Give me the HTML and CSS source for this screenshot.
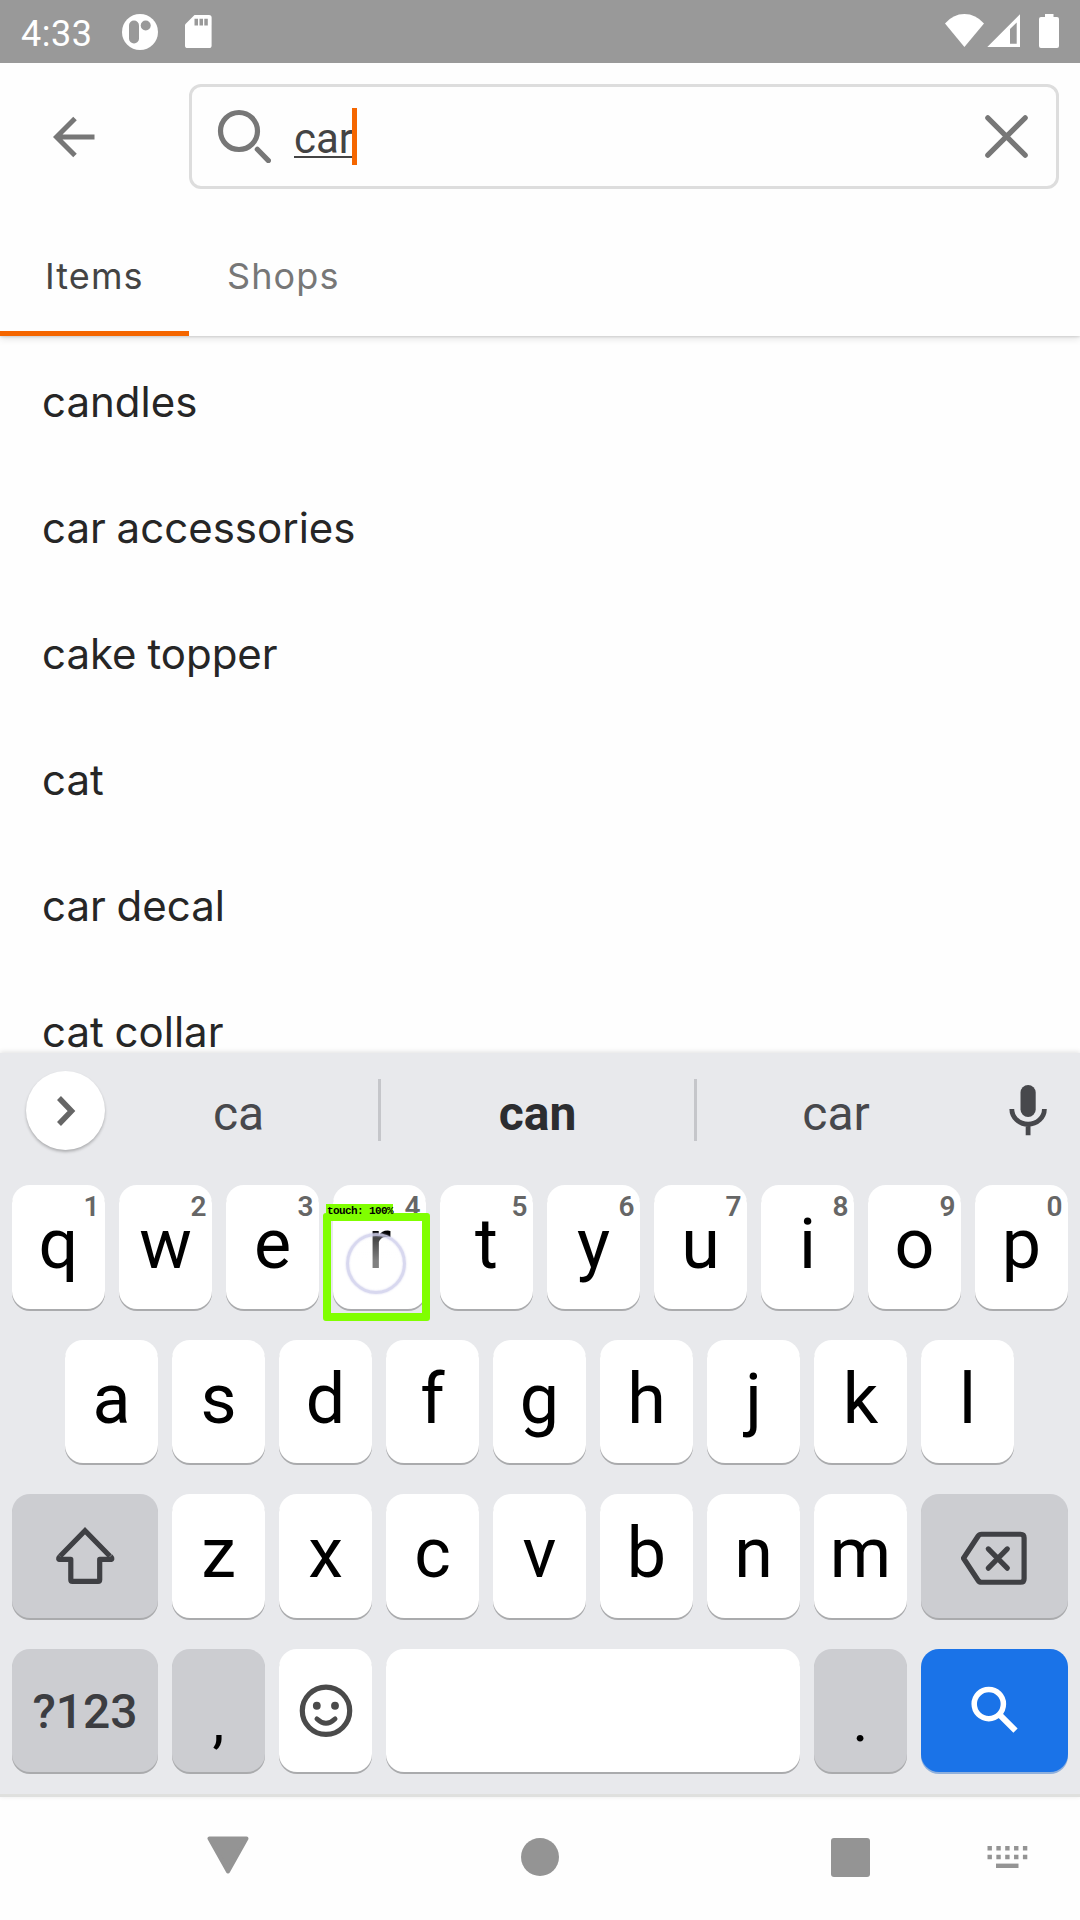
FILE: index.html
```html
<!DOCTYPE html>
<html lang="en">
<head>
<meta charset="utf-8">
<title>Search</title>
<link rel="stylesheet" href="styles.css">
</head>
<body>
<div class="screen">
  <header class="status">
    <span class="clock">4:33</span>
    <svg class="status-app" width="36" height="36" viewBox="0 0 36 36"><circle cx="18" cy="18" r="18" fill="#fff"/><rect x="7" y="6.5" width="10" height="23" rx="5" fill="#999"/><circle cx="23.7" cy="11.5" r="5" fill="#999"/></svg>
    <svg class="status-sd" width="27" height="33" viewBox="0 0 27 33"><path d="M9.5 0H24a2.6 2.6 0 0 1 2.6 2.6v27.8A2.6 2.6 0 0 1 24 33H2.6A2.6 2.6 0 0 1 0 30.400V9.500z" fill="#fff"/><path d="M9.500 3.700H13v6.800H9.500zM14.500 3.700H18v6.800h-3.500zM19.300 3.700h3.500v6.800h-3.500z" fill="#999"/></svg>
    <svg class="status-signal" width="116" height="36" viewBox="944 13 116 36" fill="#fff"><path d="M945 23.500Q953 14 964.400 14T984 23.500L964.400 47z"/><path fill-rule="evenodd" d="M987.300 47L1020 14.300V47zM1010 29v14.700h6.700V22.400z"/><path d="M1045 14h8.500v3h3.500a2 2 0 0 1 2 2v27a2 2 0 0 1-2 2h-16a2 2 0 0 1-2-2V19a2 2 0 0 1 2-2h4z"/></svg>
  </header>

  <div class="searchbar">
    <svg class="back" width="42" height="42" viewBox="53 115.500 42 42" fill="none" stroke="#777" stroke-width="5"><path d="M94.500 136.500H57M75 118L56.500 136.500 75 155"/></svg>
    <div class="field">
      <svg class="lens" width="54" height="54" viewBox="217 109 54 54" fill="none" stroke="#777" stroke-width="5.200" stroke-linecap="round"><circle cx="239" cy="131" r="18.500"/><path d="M257.300 149.300L268.400 160.600"/></svg>
      <span class="query">car</span><span class="caret"></span>
      <svg class="clear" width="43" height="43" viewBox="0 0 43 43" fill="none" stroke="#777" stroke-width="5.200" stroke-linecap="round"><path d="M2.800 2.800L40.200 40.200M40.200 2.800L2.800 40.200"/></svg>
    </div>
  </div>

  <nav class="tabs">
    <div class="tab active"><span>Items</span></div>
    <div class="tab"><span>Shops</span></div>
  </nav>

  <ul class="list">
    <li>candles</li>
    <li>car accessories</li>
    <li>cake topper</li>
    <li>cat</li>
    <li>car decal</li>
    <li>cat collar</li>
  </ul>

  <section class="keyboard">
    <div class="suggest">
      <div class="expand"><svg width="20" height="32" viewBox="0 0 20 32" fill="none" stroke="#666" stroke-width="5.500"><path d="M3 3L15.500 16 3 29"/></svg></div>
      <span class="word first">ca</span>
      <i class="sep"></i>
      <span class="word best">can</span>
      <i class="sep"></i>
      <span class="word">car</span>
      <svg class="mic" width="38" height="52" viewBox="1008.500 1084 38 52" fill="none" stroke="#47484c"><rect x="1020" y="1085" width="15.200" height="32" rx="7.600" fill="#47484c" stroke="none"/><path d="M1011.300 1109a16.300 15.300 0 0 0 32.600 0M1027.600 1124v11.300" stroke-width="4.800"/></svg>
    </div>
    <div class="rows">
      <div class="row">
        <div class="key">q<sup>1</sup></div><div class="key">w<sup>2</sup></div><div class="key">e<sup>3</sup></div>
        <div class="key">r<sup>4</sup>
          <div class="ripple"></div>
          <div class="box"></div>
          <div class="label">touch: 100%</div>
        </div>
        <div class="key">t<sup>5</sup></div><div class="key">y<sup>6</sup></div><div class="key">u<sup>7</sup></div><div class="key">i<sup>8</sup></div><div class="key">o<sup>9</sup></div><div class="key">p<sup>0</sup></div>
      </div>
      <div class="row inset">
        <div class="key">a</div><div class="key">s</div><div class="key">d</div><div class="key">f</div><div class="key">g</div><div class="key">h</div><div class="key">j</div><div class="key">k</div><div class="key">l</div>
      </div>
      <div class="row">
        <div class="key wide gray"><svg width="62" height="60" viewBox="54 1526 62 60" fill="none" stroke="#3f4044" stroke-width="5.200" stroke-linejoin="round"><path stroke-linejoin="miter" d="M60 1556.500L85 1531l25 25.500"/><path d="M60 1556.500q-3 3.200.6 3.200h10.200v20.300q0 1.600 1.600 1.600h25.700q1.600 0 1.600-1.600v-20.300h10.200q3.600 0 .6-3.200"/></svg></div>
        <div class="key">z</div><div class="key">x</div><div class="key">c</div><div class="key">v</div><div class="key">b</div><div class="key">n</div><div class="key">m</div>
        <div class="key wide gray"><svg width="68" height="56" viewBox="960.500 1528 68 56" fill="none" stroke="#3f4044" stroke-width="5.200" stroke-linejoin="round" stroke-linecap="round"><path d="M963 1558.500L977.500 1536.500q1.300-2 3.500-2h39q3.600 0 3.600 3.600v40.800q0 3.600-3.600 3.600H981q-2.200 0-3.500-2z"/><path d="M987.800 1549.200l19 19.200M1006.800 1549.200l-19 19.200"/></svg></div>
      </div>
      <div class="row">
        <div class="key wide gray sym">?123</div>
        <div class="key gray punct">,</div>
        <div class="key"><svg width="54" height="54" viewBox="0 0 54 54" fill="none" stroke="#4a4a4a" stroke-width="5.200"><circle cx="27" cy="27" r="23.700"/><g fill="#4a4a4a" stroke="none"><circle cx="17.800" cy="22" r="3.900"/><circle cx="36" cy="22" r="3.900"/></g><path d="M17.800 35q9.200 9 18.400 0" stroke-width="4.600" stroke-linecap="round"/></svg></div>
        <div class="key space"></div>
        <div class="key gray punct">.</div>
        <div class="key wide blue"><svg width="48" height="46" viewBox="970 1686.700 48 46" fill="none" stroke="#fff" stroke-width="5.500"><circle cx="987.800" cy="1704" r="14.600"/><path d="M999 1715L1014.500 1730.500" stroke-width="6"/></svg></div>
      </div>
    </div>
  </section>

  <footer class="navbar">
    <svg class="nav-back" width="42" height="38" viewBox="0 0 42 38"><path d="M2.500 2.500h37L21 35.500z" fill="#949494" stroke="#949494" stroke-width="4" stroke-linejoin="round"/></svg>
    <i class="nav-home"></i>
    <i class="nav-recent"></i>
    <svg class="nav-ime" width="41" height="24" viewBox="0 0 41 24" fill="none" stroke="#949494" stroke-width="4.400"><path stroke-dasharray="4.400 4.450" d="M.5 3.200H40.500M.5 12H40.500"/><path d="M9 20.800h22.500"/></svg>
  </footer>
</div>
</body>
</html>
```
FILE: styles.css
```css
* { box-sizing: border-box; }
body { margin: 0; }
svg { display: block; flex: none; }

.screen {
  width: 1080px;
  height: 1920px;
  display: flex;
  flex-direction: column;
  overflow: hidden;
  background: #fefefe;
  font-family: Roboto, "Noto Sans", sans-serif;
}

/* status bar */
.status {
  height: 63px;
  flex: none;
  display: flex;
  align-items: flex-start;
  padding: 0 20px 0 21px;
  background: #999;
  color: #fff;
}
.clock { width: 101px; font-size: 36px; line-height: 68px; letter-spacing: .5px; }
.status-app { margin-top: 14px; }
.status-sd { margin: 15px 0 0 27px; }
.status-signal { margin: 13px 0 0 auto; }

/* search field */
.searchbar {
  height: 147px;
  flex: none;
  display: flex;
  align-items: flex-start;
  padding: 21px 21px 0 53px;
}
.back { margin: 31.500px 94px 0 0; }
.field {
  flex: 1;
  height: 105px;
  display: flex;
  align-items: flex-start;
  border: 3px solid #ddd;
  border-radius: 12px;
}
.lens { margin: 22px 23px 0 25px; }
.query {
  margin-top: 21px;
  width: 58px;
  font-size: 42px;
  line-height: 62px;
  color: #444;
  text-decoration: underline;
  text-decoration-thickness: 2px;
  text-underline-offset: 3px;
}
.caret { width: 5px; height: 57px; margin-top: 21px; background: #f56600; }
.clear { margin: 28px 28px 0 auto; }

/* tabs */
.tabs {
  position: relative;
  z-index: 1;
  height: 126px;
  flex: none;
  display: flex;
  background: #fefefe;
  box-shadow: 0 1px 2px rgba(0, 0, 0, .12), 0 3px 7px rgba(0, 0, 0, .1);
  clip-path: inset(0 0 -12px 0);
  font: 36px/132px Inter, sans-serif;
  color: #777;
}
.tab { padding: 0 38px; letter-spacing: 1.1px; }
.tab.active { width: 189px; padding: 0 0 0 45px; color: #444; border-bottom: 5px solid #f56600; }

/* suggestions from the shop */
.list {
  flex: none;
  height: 717px;
  margin: 0;
  padding: 3px 0 0 42px;
  overflow: hidden;
  list-style: none;
  font: 42px/126px Inter, sans-serif;
  word-spacing: -1px;
  color: #262626;
}

/* keyboard */
.keyboard {
  position: relative;
  z-index: 1;
  height: 744px;
  flex: none;
  background: #e8e9ec;
  border-bottom: 3px solid #dfe0de;
  box-shadow: 0 -1px 5px rgba(0, 0, 0, .12);
}
.suggest { height: 132px; display: flex; align-items: flex-start; }
.expand {
  width: 79px;
  height: 79px;
  margin: 18px 0 0 26px;
  display: flex;
  align-items: center;
  justify-content: center;
  border-radius: 50%;
  background: #fff;
  box-shadow: 0 2px 3px rgba(0, 0, 0, .25);
}
.word { width: 313px; text-align: center; font-size: 48px; line-height: 121px; color: #47484c; }
.word.first { width: 273px; padding-right: 6px; }
.word.best { font-weight: 700; color: #2c2d30; }
.suggest .word:last-of-type { width: 278px; }
.sep { width: 3px; height: 62px; margin-top: 26px; background: #c5c6ca; }
.mic { margin: 31px 33.500px 0 auto; }

.rows { display: flex; flex-direction: column; gap: 31px; padding: 0 12px; }
.row { display: flex; gap: 14px; height: 123.500px; }
.row.inset { padding: 0 53px; }
.key {
  position: relative;
  width: 93px;
  flex: none;
  border-radius: 18px;
  background: #fff;
  box-shadow: 0 2px 0 #aaabad;
  font-size: 70px;
  line-height: 118px;
  text-align: center;
  color: #000;
}
.key > svg { margin: auto; height: 100%; }
.wide { width: 146px; }
.wide:last-child { width: 147px; }
.gray { background: #cccdd1; }
.blue { background: #1a73e8; box-shadow: 0 2px 0 #8fb0dc; }
.blue > svg { margin-top: -1px; }
.space { width: 414px; }
.sym { font-size: 48px; line-height: 126px; font-weight: 500; color: #3c3d41; }
.punct { font-size: 60px; line-height: 143px; }
sup {
  position: absolute;
  top: 0;
  right: 5.500px;
  font-size: 28px;
  line-height: 43px;
  font-weight: 600;
  color: #666;
}

/* touch annotation over the pressed key */
.ripple {
  position: absolute;
  left: 13px;
  top: 48px;
  width: 60px;
  height: 61px;
  border-radius: 50%;
  border: 3px solid rgba(200, 200, 232, .7);
  background: linear-gradient(rgba(255, 255, 255, .25), rgba(255, 255, 255, .5) 45%);
  box-shadow: 0 0 2px rgba(200, 200, 232, .8), inset 0 0 2px rgba(200, 200, 232, .8);
}
.box {
  position: absolute;
  left: -10px;
  top: 28px;
  width: 107px;
  height: 108px;
  border: 8px solid #80ff00;
  border-radius: 3px;
}
.label {
  position: absolute;
  left: -7px;
  top: 19px;
  width: 67px;
  height: 12px;
  padding-left: 1px;
  background: #80ff00;
  font: 700 11px/14px "Liberation Mono", monospace;
  letter-spacing: -.6px;
  text-align: left;
  white-space: nowrap;
}

/* navigation bar */
.navbar { flex: 1; display: flex; align-items: flex-start; }
.nav-back { margin: 38.500px 0 0 207px; }
.nav-home { width: 38px; height: 38px; margin: 41px 0 0 272px; border-radius: 50%; background: #949494; }
.nav-recent { width: 39px; height: 39px; margin: 41px 0 0 272px; border-radius: 3px; background: #949494; }
.nav-ime { margin: 48px 0 0 117px; }
```
